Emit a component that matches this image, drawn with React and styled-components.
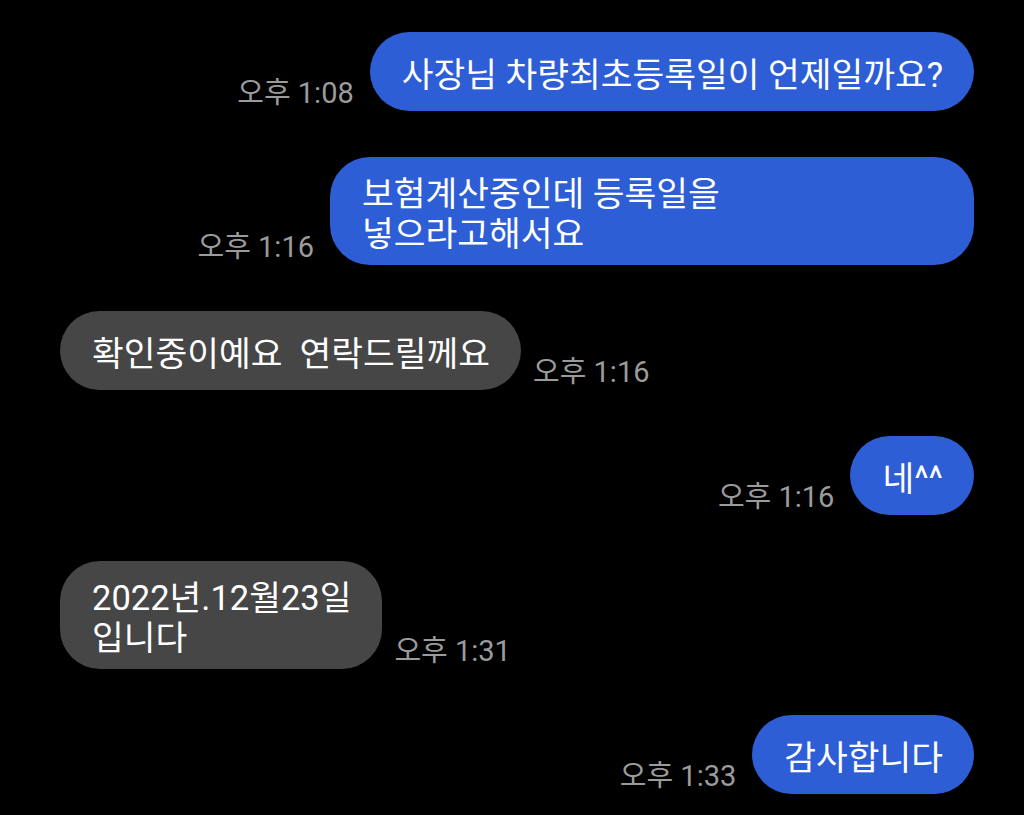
import React from 'react';
import styled, { createGlobalStyle } from 'styled-components';

const GlobalStyle = createGlobalStyle`
  html, body {
    margin: 0;
    padding: 0;
    background: #000000;
  }
  body {
    font-family: Roboto, "Noto Sans CJK KR", sans-serif;
  }
`;

const ChatScreen = styled.div`
  display: flex;
  flex-direction: column;
  gap: 46px;
  min-height: 100vh;
  box-sizing: border-box;
  padding: 32px 50px 0 60px;
  background: #000000;
`;

const MessageRow = styled.div`
  display: flex;
  flex-direction: ${props => (props.mine ? 'row-reverse' : 'row')};
  justify-content: flex-start;
  align-items: flex-end;
  gap: ${props => (props.mine ? '16px' : '12px')};
`;

const Bubble = styled.div`
  box-sizing: border-box;
  min-height: 79px;
  max-width: 644px;
  display: flex;
  align-items: center;
  padding: 17px 31px 11px 32px;
  border-radius: 40px;
  background: ${props => (props.mine ? '#2e5ed6' : '#464646')};
  color: #ffffff;
  font-family: Roboto, "Noto Sans CJK KR", sans-serif;
  font-size: 34.5px;
  line-height: 40px;
  white-space: pre-wrap;
  word-break: keep-all;
`;

const Time = styled.span`
  color: #9b9b9b;
  font-family: Roboto, "Noto Sans CJK KR", sans-serif;
  font-size: 29px;
  line-height: 32px;
  white-space: nowrap;
  margin-bottom: 2px;
`;

const messages = [
  { mine: true, text: '사장님 차량최초등록일이 언제일까요?', time: '오후 1:08' },
  { mine: true, text: '보험계산중인데 등록일을 넣으라고해서요', time: '오후 1:16' },
  { mine: false, text: '확인중이예요  연락드릴께요', time: '오후 1:16' },
  { mine: true, text: '네^^', time: '오후 1:16' },
  { mine: false, text: '2022년.12월23일\n입니다', time: '오후 1:31' },
  { mine: true, text: '감사합니다', time: '오후 1:33' },
];

function App() {
  return (
    <>
      <GlobalStyle />
      <ChatScreen>
        {messages.map((m, i) => (
          <MessageRow key={i} mine={m.mine}>
            <Bubble mine={m.mine}>{m.text}</Bubble>
            <Time>{m.time}</Time>
          </MessageRow>
        ))}
      </ChatScreen>
    </>
  );
}

export default App;
